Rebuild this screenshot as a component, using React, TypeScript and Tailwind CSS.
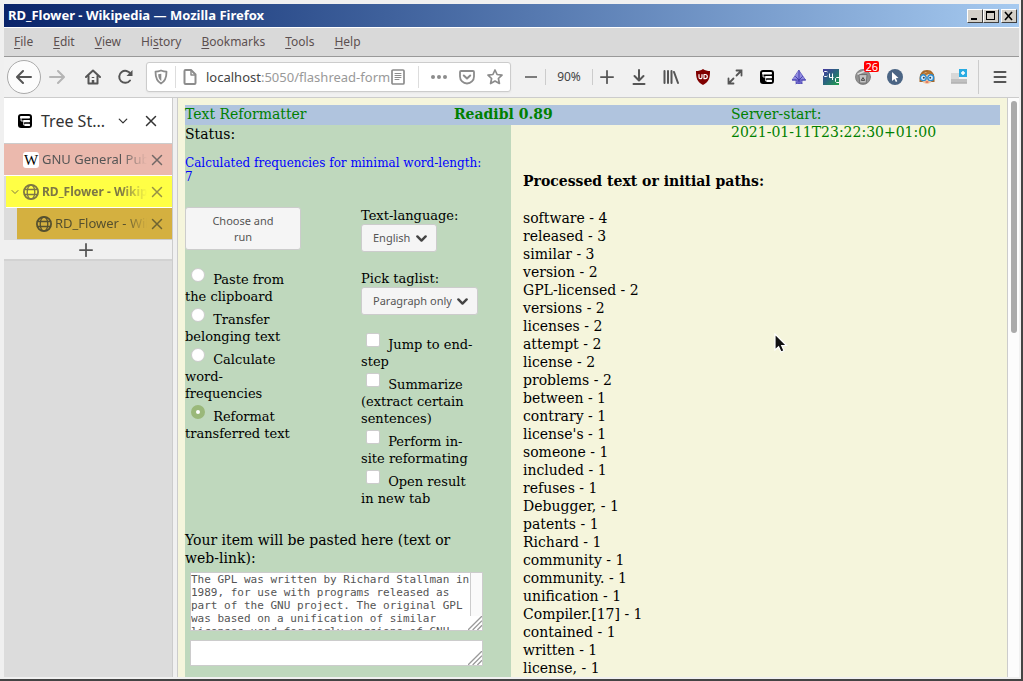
import type { ReactNode } from "react";

const words: [string, number][] = [
  ["software", 4], ["released", 3], ["similar", 3], ["version", 2], ["GPL-licensed", 2],
  ["versions", 2], ["licenses", 2], ["attempt", 2], ["license", 2], ["problems", 2],
  ["between", 1], ["contrary", 1], ["license's", 1], ["someone", 1], ["included", 1],
  ["refuses", 1], ["Debugger,", 1], ["patents", 1], ["Richard", 1], ["community", 1],
  ["community.", 1], ["unification", 1], ["Compiler.[17]", 1], ["contained", 1],
  ["written", 1], ["license,", 1],
];

const gpl = `The GPL was written by Richard Stallman in
1989, for use with programs released as
part of the GNU project. The original GPL
was based on a unification of similar
licenses used for early versions of GNU
Emacs, the GNU Debugger, and the GNU C
Compiler.[17]`;

function Icon({ children, className = "size-4" }: { children: ReactNode; className?: string }) {
  return (
    <svg viewBox="0 0 16 16" className={`shrink-0 ${className}`} fill="none" stroke="currentColor" strokeWidth="2" strokeLinecap="round" strokeLinejoin="round" aria-hidden="true">
      {children}
    </svg>
  );
}

function Tool({ label, children }: { label: string; children: ReactNode }) {
  return (
    <button aria-label={label} className="flex h-8 w-8 shrink-0 items-center justify-center text-[#555]">
      {children}
    </button>
  );
}

function TreeIcon() {
  return (
    <Icon className="size-[14px]">
      <rect x="0" y="0" width="16" height="16" rx="3.500" fill="#000" stroke="none" />
      <rect x="2.300" y="2.300" width="11.400" height="2.800" rx="1" fill="#fff" stroke="none" />
      <rect x="6" y="6.800" width="7.700" height="2.600" rx=".8" fill="#fff" stroke="none" />
      <rect x="7.500" y="11.200" width="6.200" height="2.600" rx=".8" fill="#fff" stroke="none" />
      <path d="M3.500 5v3h3M6.500 9v3.500h1.500" stroke="#fff" strokeWidth="1" />
    </Icon>
  );
}

function CloseIcon() {
  return <Icon className="size-3"><path d="M2 2l12 12M14 2L2 14" /></Icon>;
}

function Globe() {
  return (
    <Icon>
      <circle cx="8" cy="8" r="7.100" strokeWidth="1.800" />
      <ellipse cx="8" cy="8" rx="3.800" ry="7" strokeWidth="1.300" />
      <path d="M1.500 5.500h13M1.500 10.500h13" strokeWidth="1.300" />
    </Icon>
  );
}

function TitleBar() {
  const button = "flex h-[14px] w-4 items-center justify-center border border-t-white border-l-white border-r-[#404040] border-b-[#404040] bg-[#d4d0c8] text-black";
  return (
    <header className="flex h-[23px] shrink-0 items-center bg-linear-to-r from-[#0a246a] to-[#a6caf0] pr-[2px] pl-1">
      <h1 className="flex-1 text-[13px] font-bold whitespace-nowrap text-white">RD_Flower - Wikipedia — Mozilla Firefox</h1>
      <button aria-label="Minimize" className={button}>
        <svg viewBox="0 0 12 10" className="h-[10px] w-3" shapeRendering="crispEdges"><path d="M2 7h6v2H2z" /></svg>
      </button>
      <button aria-label="Maximize" className={button}>
        <svg viewBox="0 0 12 10" className="h-[10px] w-3" shapeRendering="crispEdges"><path fillRule="evenodd" d="M1 0h9v9H1zM2 2v6h7V2z" /></svg>
      </button>
      <button aria-label="Close" className={`${button} ml-[2px]`}>
        <svg viewBox="0 0 12 10" className="h-[10px] w-3" stroke="#000" strokeWidth="1.600"><path d="M2 1l7 8M9 1L2 9" /></svg>
      </button>
    </header>
  );
}

const menus = [["", "F", "ile"], ["", "E", "dit"], ["", "V", "iew"], ["Hi", "s", "tory"], ["", "B", "ookmarks"], ["", "T", "ools"], ["", "H", "elp"]];

function MenuBar() {
  return (
    <nav className="flex h-[30px] shrink-0 items-center gap-5 border-t border-b border-t-white border-b-[#999] bg-[#d9d9d9] pl-[10px] text-[12px] text-[#5c5050]">
      {menus.map(([a, b, c]) => (
        <button key={b + c}>{a}<span className="underline underline-offset-2">{b}</span>{c}</button>
      ))}
    </nav>
  );
}

function Toolbar() {
  return (
    <div className="flex h-[41px] shrink-0 items-center border-b border-[#ccc] bg-[#f1f1f1] pr-[3px] pl-[3px]">
      <button aria-label="Back" className="flex size-[34px] shrink-0 items-center justify-center rounded-full border border-[#aaa] bg-[#fcfcfc] text-[#555]">
        <Icon><path d="M15 8H1.500M7 2L1 8l6 6" /></Icon>
      </button>
      <button aria-label="Forward" className="flex h-8 w-8 shrink-0 items-center justify-center text-[#b5b5b5]">
        <Icon><path d="M1 8h13.500M9 2l6 6-6 6" /></Icon>
      </button>
      <div className="flex w-[73px] shrink-0 pl-1">
        <Tool label="Home">
          <Icon><path d="M1 8l7-6.500L15 8" /><path d="M3.500 7v7.500h9V7" /><path d="M8 8v1M8 11v3" strokeWidth="2.500" strokeLinecap="butt" /></Icon>
        </Tool>
        <Tool label="Reload">
          <Icon><path d="M13 11.500A6 6 0 1 1 13.500 5" /><path d="M15.500 1v6h-6z" fill="currentColor" stroke="none" /></Icon>
        </Tool>
      </div>
      <div className="flex h-[30px] min-w-0 flex-1 items-center rounded-[3px] border border-[#ccc] bg-white pr-[7px] pl-[6px] text-[#8c8c8c] shadow-xs">
        <Icon><path d="M8 1.500C6 2.300 4 2.700 2.500 2.700c0 6 1 9.300 5.500 11.800 4.500-2.500 5.500-5.800 5.500-11.800C12 2.700 10 2.300 8 1.500z" strokeWidth="1.800" /><path d="M8.300 4.800v7.200C6 10.500 5.300 8.500 5.200 5.300z" fill="currentColor" stroke="none" /></Icon>
        <span className="mx-[6px] h-[22px] w-px bg-[#ddd]" />
        <Icon><path d="M3.500 1H9l4.500 4.500v8.500a1 1 0 0 1-1 1h-9a1 1 0 0 1-1-1V2a1 1 0 0 1 1-1z" /><path d="M9 1.500V6h4" strokeWidth="1.500" /></Icon>
        <div className="relative ml-2 h-5 min-w-0 flex-1">
          <input aria-label="Address" defaultValue="localhost:5050/flashread-form" className="absolute inset-0 w-full bg-transparent text-[13px] text-transparent outline-none" />
          <span aria-hidden="true" className="pointer-events-none block text-[13px] leading-5 whitespace-nowrap text-[#999]"><span className="text-[#444]">localhost</span>:5050/flashread-form</span>
        </div>
        <Icon><rect x="2" y="1" width="12" height="14" rx="1" strokeWidth="1.700" /><path d="M5 4.500h6M5 6.500h6M5 8.500h6M5 10.500h4" strokeWidth="1" /></Icon>
        <span className="mr-3 ml-[12px] h-[22px] w-px bg-[#ddd]" />
        <div className="flex items-center gap-3">
          <Icon><g fill="currentColor" stroke="none"><circle cx="2" cy="8" r="2" /><circle cx="8" cy="8" r="2" /><circle cx="14" cy="8" r="2" /></g></Icon>
          <Icon><path d="M2 2h12a1 1 0 0 1 1 1v4.500a7 7 0 0 1-14 0V3a1 1 0 0 1 1-1z" strokeWidth="1.800" /><path d="M4.800 6.500L8 9.500l3.200-3" /></Icon>
          <Icon><path d="M8 1l2.100 4.500 4.900.6-3.600 3.400 1 5L8 12l-4.400 2.500 1-5L1 6.100l4.900-.6z" strokeWidth="1.700" /></Icon>
        </div>
      </div>
      <button aria-label="Zoom out" className="ml-[6px] flex h-8 w-7 items-center justify-center text-[#555]"><Icon className="size-3"><path d="M0 8h16" /></Icon></button>
      <span className="flex h-4 w-12 items-center justify-center border-x border-[#ccc] text-[12px] text-[#444]">90%</span>
      <button aria-label="Zoom in" className="mr-[2px] flex h-8 w-7 items-center justify-center text-[#555]"><Icon className="size-[14px]"><path d="M1 8h14M8 1v14" /></Icon></button>
      <Tool label="Downloads"><Icon><path d="M8 1v10M3.500 7L8 11.500 12.500 7M2.500 15h11" /></Icon></Tool>
      <Tool label="Library"><Icon><path d="M1.500 2v12M5 2v12M8.500 2v12M11 3l4 11" /></Icon></Tool>
      <Tool label="uBlock Origin">
        <Icon><path d="M8 0c2 1.500 4.500 2 7 2 0 7-1 11-7 14C2 13 1 9 1 2c2.500 0 5-.5 7-2z" fill="#800000" stroke="none" /><path d="M4 5.500v2.700a1.500 1.500 0 0 0 3 0V5.500" stroke="#fff" strokeWidth="1.200" /><path d="M9 5.500h1.200a2.100 2.100 0 0 1 0 4.200H9z" stroke="#fff" strokeWidth="1.200" /></Icon>
      </Tool>
      <Tool label="Expand"><Icon><path d="M9.500 6.500L14 2M9.500 1.500h5v5M6.500 9.500L2 14M1.500 9.500v5h5" strokeWidth="1.800" strokeLinejoin="miter" /></Icon></Tool>
      <Tool label="Tree Style Tab"><TreeIcon /></Tool>
      <Tool label="Go up"><Icon><path d="M8 1.500l6.500 9.500h-3.500v3.500H5V11H1.500z" fill="#8f8ae0" stroke="#5750bd" strokeWidth=".8" /><path d="M8 1.500v13M1.500 11h13M4.500 7.500L8 11l3.500-3.500M5 14.500l3-3 3 3" stroke="#4038a8" strokeWidth=".9" /></Icon></Tool>
      <Tool label="C4C">
        <svg viewBox="0 0 16 16" className="size-4" aria-hidden="true">
          <defs><linearGradient id="c4" x1="0" y1="0" x2="1" y2="1"><stop offset="0" stopColor="#4737a0" /><stop offset=".5" stopColor="#28677c" /><stop offset="1" stopColor="#21a04a" /></linearGradient></defs>
          <rect width="16" height="16" fill="url(#c4)" />
          <path d="M4.500 3L3.500 2.500H1.500L.5 3.500v3l1 1h2l1-.5M6.500 4.500v4h4M9.500 4.500v6.500M16 8.500h-2.500l-1 1v3l1 1H16" fill="none" stroke="#fff" strokeWidth="1" />
        </svg>
      </Tool>
      <span className="relative">
        <Tool label="Cookie AutoDelete"><Icon><circle cx="8" cy="8" r="7.500" fill="#929292" stroke="#777" strokeWidth=".8" /><path d="M4 6l.8 8h6.400l.8-8z" fill="#c4c4c4" stroke="#666" strokeWidth=".8" /><path d="M3 5l7-3" stroke="#ddd" strokeWidth="1.500" /><path d="M6.500 11l1.500-2.500L9.500 11z" stroke="#444" strokeWidth="1" /></Icon></Tool>
        <span className="absolute top-0 right-0 rounded-xs bg-[#f00] px-px text-[11px] leading-[11px] text-white">26</span>
      </span>
      <Tool label="Pointer"><Icon><circle cx="8" cy="8" r="8" fill="#4b6584" stroke="none" /><path d="M5 3l6.500 6-2.700.3 1.500 3-1.400.7-1.500-3L5 12z" fill="#fff" stroke="none" /></Icon></Tool>
      <Tool label="Reader">
        <Icon><path d="M.5 13C0 4 3 1 8 1s8 3 7.500 12z" fill="#a5682a" stroke="none" /><ellipse cx="8" cy="9" rx="5.500" ry="6" fill="#f5c9a0" stroke="none" /><path d="M2 6c3 0 6-1 8-3 1 1 2 2 4 3" stroke="#b5742f" strokeWidth="2" /><circle cx="4.300" cy="8.700" r="2.900" fill="#d8efff" stroke="#2a8bd0" strokeWidth="1.400" /><circle cx="11.700" cy="8.700" r="2.900" fill="#d8efff" stroke="#2a8bd0" strokeWidth="1.400" /><circle cx="4.800" cy="8.700" r="1" fill="#345" stroke="none" /><circle cx="11.200" cy="8.700" r="1" fill="#345" stroke="none" /><path d="M7 13h2" stroke="#c33" strokeWidth="1" /></Icon>
      </Tool>
      <Tool label="New container"><Icon><path d="M0 4h8v7H0z" fill="#d8d8d8" stroke="none" /><path d="M0 10h16v4.500H0z" fill="#c0c0c0" stroke="none" /><path d="M0 14h16" stroke="#aaa" strokeWidth="1" strokeLinecap="butt" /><path d="M8 0h8v8H8z" fill="#29abe2" stroke="none" /><path d="M12 2v4M10 4h4" stroke="#fff" strokeWidth="1.500" strokeLinecap="butt" /></Icon></Tool>
      <span className="mr-[5px] ml-[3px] h-[34px] w-px bg-[#ccc]" />
      <Tool label="Menu"><Icon><path d="M2.500 3h11M2.500 8h11M2.500 13h11" /></Icon></Tool>
    </div>
  );
}

function Tab({ icon, title, className }: { icon: ReactNode; title: string; className: string }) {
  return (
    <li className={`flex h-8 items-center border-b pr-[9px] ${className}`}>
      {icon}
      <a href="#" className="ml-[3px] min-w-0 flex-1 overflow-hidden mask-r-from-75% whitespace-nowrap">{title}</a>
      <button aria-label={`Close ${title}`} className="ml-1 opacity-80"><CloseIcon /></button>
    </li>
  );
}

function Sidebar() {
  return (
    <aside className="flex w-[169px] shrink-0 flex-col border-r border-[#ccc] bg-[#dcdcdc] text-[#555]">
      <div className="flex h-[46px] items-center border-b border-[#ccc] bg-white pr-[15px] pl-[14px] text-[#333]">
        <TreeIcon />
        <h2 className="ml-[9px] flex-1 text-[16px] whitespace-nowrap">Tree St...</h2>
        <button aria-label="Switch sidebar" className="mr-[17px]"><Icon className="size-[10px]"><path d="M2 5l6 6 6-6" /></Icon></button>
        <button aria-label="Close sidebar"><CloseIcon /></button>
      </div>
      <ul>
        <Tab
          title="GNU General Public License"
          className="border-white bg-[#ebb9ad] pl-[19px] text-[13px]"
          icon={<span className="flex size-4 shrink-0 items-center justify-center rounded-[3px] bg-white font-['Liberation_Serif',serif] text-[15px] leading-4 text-black">W</span>}
        />
        <Tab
          title="RD_Flower - Wikipedia"
          className="ml-[2px] border-white bg-[#ffff45] pl-[5px] text-[12px] font-bold text-[#7d7745]"
          icon={<><Icon className="mr-1 size-2"><path d="M2 5l6 6 6-6" /></Icon><Globe /></>}
        />
        <Tab title="RD_Flower - Wikipedia" className="ml-[13px] border-[#ccc] bg-[#d4b040] pl-[19px] text-[13px] text-[#55502f]" icon={<Globe />} />
      </ul>
      <button aria-label="New tab" className="flex h-[21px] items-center justify-center border-b-2 border-[#d2d2d2] bg-[#f0f0f0] pr-[5px]">
        <Icon className="size-[14px]"><path d="M1 8h14M8 1v14" /></Icon>
      </button>
    </aside>
  );
}

function Picker({ label, value }: { label: string; value: string }) {
  return (
    <div className="mb-[18px] flex flex-col items-start">
      <label htmlFor={value} className="leading-[17px]">{label}</label>
      <span className="relative">
        <select id={value} className="h-7 appearance-none rounded-[3px] border border-[#ccc] bg-[#f5f5f5] pr-[25px] pl-[11px] font-['Noto_Sans',sans-serif] text-[11px] text-[#555]">
          <option>{value}</option>
        </select>
        <span className="pointer-events-none absolute inset-y-0 right-[10px] flex items-center text-[#444]"><Icon className="size-[11px]"><path d="M2 5l6 6 6-6" strokeWidth="3.500" /></Icon></span>
      </span>
    </div>
  );
}

const modes = ["Paste from the clipboard", "Transfer belonging text", "Calculate word-frequencies", "Reformat transferred text"];
const options = ["Jump to end-step", "Summarize (extract certain sentences)", "Perform in-site reformating", "Open result in new tab"];

function Grip() {
  return (
    <svg viewBox="0 0 15 15" className="pointer-events-none absolute right-px bottom-px size-[14px] bg-white" fill="none" stroke="#999" strokeWidth="1.400" aria-hidden="true">
      <path d="M0 15L15 0M5 15L15 5M10 15l5-5" />
    </svg>
  );
}

function FormPanel() {
  return (
    <form className="w-2/5 shrink-0 bg-[#bfd8bd]">
      <p className="leading-[18px]">Status:</p>
      <p className="mt-[13px] pr-6 text-[12px] leading-[14px] text-[#00f]">Calculated frequencies for minimal word-length: 7</p>
      <div className="mt-[23px] grid grid-cols-[116px_116px] gap-x-[60px] text-[13px]">
        <div>
          <button type="button" className="h-[43px] w-full rounded-[3px] border border-[#ccc] bg-[#f5f5f5] px-4 font-['Noto_Sans',sans-serif] text-[11px] leading-4 text-[#555]">Choose and<br />run</button>
          <div className="mt-[18px] flex flex-col gap-[3px] pr-1 leading-[17px]">
            {modes.map((m, i) => (
              <label key={m} className="block">
                <input type="radio" name="mode" defaultChecked={i === 3} className="mr-1 ml-[6px] size-[14px] appearance-none rounded-full border border-[#ccc] bg-white align-[2px] checked:border-[5px] checked:border-[#9ab87a]" /> {m}
              </label>
            ))}
          </div>
        </div>
        <div>
          <Picker label="Text-language:" value="English" />
          <Picker label="Pick taglist:" value="Paragraph only" />
          <div className="flex flex-col gap-[3px] leading-[17px]">
            {options.map((o) => (
              <label key={o} className="block">
                <input type="checkbox" className="mr-1 ml-[5px] size-[14px] appearance-none rounded-[2px] border border-[#ccc] bg-white align-[2px]" /> {o}
              </label>
            ))}
          </div>
        </div>
      </div>
      <label htmlFor="item" className="mt-6 block pr-6 leading-[18px]">Your item will be pasted here (text or web-link):</label>
      <div className="mt-[5px] ml-[5px] flex w-[293px] flex-col gap-[9px] font-['DejaVu_Sans_Mono',monospace] text-[11px] leading-[13px] text-[#555]">
        <div className="relative flex">
          <textarea id="item" defaultValue={gpl} className="h-[59px] w-full resize-none overflow-hidden border border-[#ccc] bg-white whitespace-pre" />
          <span className="absolute top-px right-px h-[43px] w-3 border-l border-[#ccc] bg-[#fafafa]" />
          <Grip />
        </div>
        <div className="relative flex">
          <textarea aria-label="Result" className="h-[26px] w-full resize-none overflow-hidden border border-[#ccc] bg-white" />
          <Grip />
        </div>
      </div>
    </form>
  );
}

export default function App() {
  return (
    <div className="flex h-screen flex-col overflow-hidden border-r-2 border-b-2 border-[#444] bg-[#f0f0f0] pt-1 pr-[2px] pb-[2px] pl-1 font-['Noto_Sans',sans-serif]">
      <TitleBar />
      <MenuBar />
      <Toolbar />
      <div className="flex min-h-0 flex-1">
        <Sidebar />
        <main className="relative ml-1 flex min-w-0 flex-1 overflow-hidden border-l border-[#ccc] bg-[#f5f5dc] font-['DejaVu_Serif',serif] text-[14px] text-black">
          <div className="flex min-w-0 flex-1 flex-col pt-[7px] pr-[7px] pl-[7px]">
            <div className="grid h-5 shrink-0 grid-cols-[33%_34%_33%] bg-[#b0c4de] leading-[18px] text-[#008000]">
              <span>Text Reformatter</span>
              <strong>Readibl 0.89</strong>
              <span>Server-start:<br />2021-01-11T23:22:30+01:00</span>
            </div>
            <div className="flex min-h-0 flex-1">
              <FormPanel />
              <section className="pt-[47px] pl-3 leading-[18px]">
                <h2 className="font-bold">Processed text or initial paths:</h2>
                <ul className="mt-[19px]">
                  {words.map(([w, n]) => <li key={w}>{w} - {n}</li>)}
                </ul>
              </section>
            </div>
          </div>
          <div className="flex w-3 shrink-0 justify-center border-l border-[#ccc] bg-[#fcfcfc] pt-[3px]">
            <span className="h-[232px] w-[6px] rounded-full bg-[#aaa]" />
          </div>
          <svg viewBox="0 0 14 20" className="pointer-events-none absolute top-[235px] left-[596px] h-5 w-[14px]" aria-hidden="true">
            <path d="M1 1v16l3.600-3.200L7 19l3-1.300L7.700 12.500H12.500z" fill="#111" stroke="#fff" strokeWidth="1.200" />
          </svg>
        </main>
      </div>
    </div>
  );
}
